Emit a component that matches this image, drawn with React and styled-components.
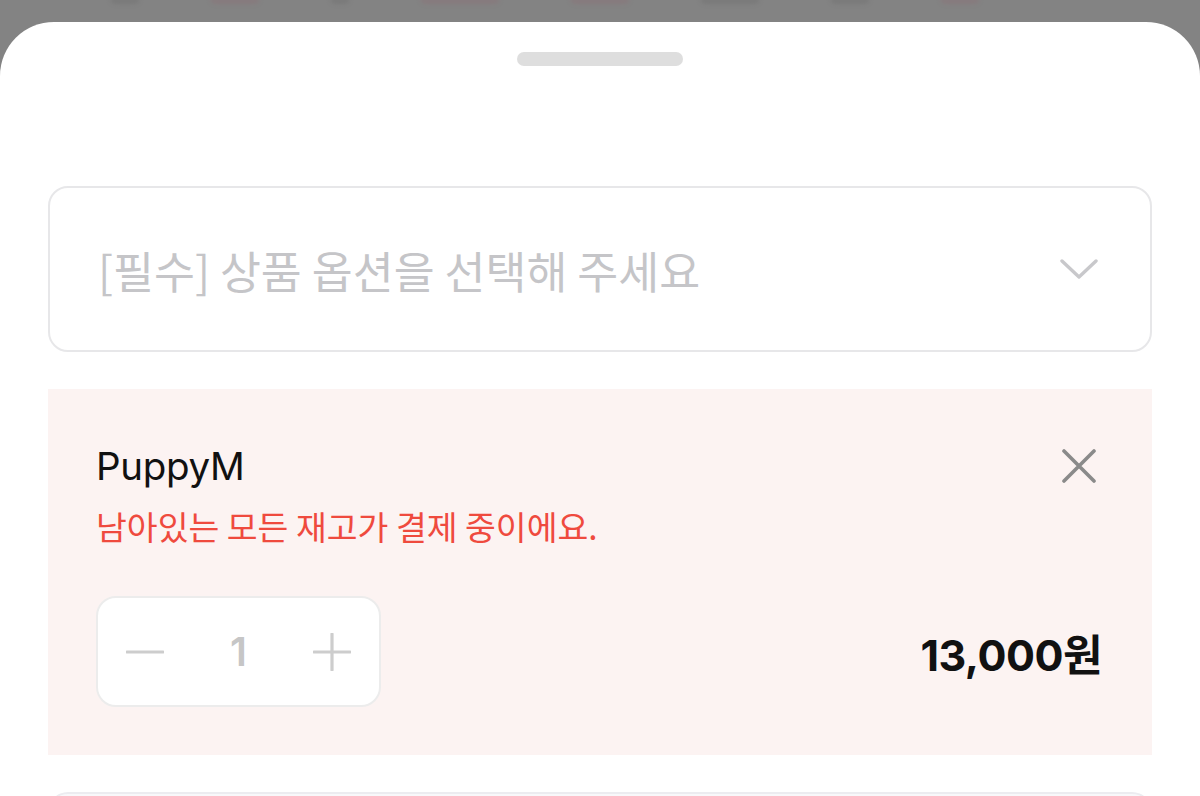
import React from "react";
import styled, { createGlobalStyle } from "styled-components";

const GlobalStyle = createGlobalStyle`
  html, body {
    margin: 0;
    padding: 0;
    background: #838383;
  }
  body {
    font-family: "Inter", "Noto Sans CJK KR", "Noto Sans", sans-serif;
    -webkit-font-smoothing: antialiased;
  }
`;

const Screen = styled.div`
  width: 1200px;
  height: 796px;
  overflow: hidden;
  display: flex;
  flex-direction: column;
  background: #838383;
`;

// bits of the page behind the sheet, cut off at the top
const Backdrop = styled.div`
  height: 22px;
  flex: none;
  display: flex;
  align-items: flex-start;
  gap: 70px;
  padding-left: 110px;
  overflow: hidden;
`;

const Blob = styled.span`
  display: block;
  width: ${(p) => p.w}px;
  height: 6px;
  margin-top: -2px;
  border-radius: 0 0 6px 6px;
  background: ${(p) => (p.pink ? "#8b7177" : "#707070")};
  filter: blur(2px);
  opacity: 0.5;
`;

const Sheet = styled.div`
  flex: 1;
  background: #ffffff;
  border-radius: 54px 54px 0 0;
  padding: 0 48px;
  display: flex;
  flex-direction: column;
`;

const Handle = styled.div`
  width: 166px;
  height: 14px;
  border-radius: 7px;
  background: #dedede;
  margin: 30px auto 0;
  flex: none;
`;

const Select = styled.div`
  margin-top: 120px;
  height: 166px;
  box-sizing: border-box;
  border: 2px solid #e7e7e9;
  border-radius: 20px;
  display: flex;
  align-items: center;
  justify-content: space-between;
  padding: 0 52px 0 48px;
  flex: none;
`;

const Placeholder = styled.span`
  font-family: "Noto Sans CJK KR", sans-serif;
  font-size: 44.5px;
  font-weight: 400;
  color: #c5c5c8;
`;

const OptionCard = styled.div`
  margin-top: 37px;
  height: 366px;
  box-sizing: border-box;
  background: #fcf3f2;
  padding: 52px 48px 48px;
  display: flex;
  flex-direction: column;
  flex: none;
`;

const HeaderRow = styled.div`
  display: flex;
  align-items: center;
  justify-content: space-between;
`;

const Name = styled.span`
  font-size: 38.5px;
  color: #111111;
  letter-spacing: -0.3px;
  line-height: 50px;
`;

const CloseButton = styled.button`
  border: none;
  background: none;
  padding: 0;
  margin-right: 8px;
  display: flex;
`;

const Warning = styled.div`
  margin-top: 13px;
  font-family: "Noto Sans CJK KR", sans-serif;
  font-size: 33.5px;
  line-height: 44px;
  color: #ef4a3e;
`;

const BottomRow = styled.div`
  margin-top: auto;
  display: flex;
  align-items: center;
  justify-content: space-between;
`;

const Stepper = styled.div`
  width: 285px;
  height: 111px;
  box-sizing: border-box;
  background: #ffffff;
  border: 2px solid #ececec;
  border-radius: 20px;
  display: flex;
  align-items: center;
  justify-content: space-between;
  padding: 0 28px;
`;

const StepButton = styled.button`
  border: none;
  background: none;
  padding: 0;
  display: flex;
`;

const Count = styled.span`
  font-size: 40px;
  font-weight: 600;
  color: #c6c6c6;
`;

const Price = styled.span`
  font-family: "Inter", "Noto Sans CJK KR", sans-serif;
  font-size: 43px;
  font-weight: 700;
  letter-spacing: -0.5px;
  color: #111111;
  margin-right: 2px;
`;

const NextField = styled.div`
  margin-top: 37px;
  height: 60px;
  border: 2px solid #ececf0;
  border-bottom: none;
  border-radius: 20px 20px 0 0;
  background: #f8f8fa;
  flex: none;
`;

const Chevron = () => (
  <svg width="38" height="22" viewBox="0 0 38 22" fill="none">
    <path d="M2 3 L19 19 L36 3" stroke="#c8c8cb" strokeWidth="3.4" strokeLinecap="round" strokeLinejoin="round" />
  </svg>
);

const CloseIcon = () => (
  <svg width="34" height="34" viewBox="0 0 34 34" fill="none">
    <path d="M2 2 L32 32 M32 2 L2 32" stroke="#8a8a8a" strokeWidth="3.6" strokeLinecap="round" />
  </svg>
);

const Minus = () => (
  <svg width="38" height="38" viewBox="0 0 38 38" fill="none">
    <path d="M1 19 H37" stroke="#cdcdcd" strokeWidth="3.2" strokeLinecap="round" />
  </svg>
);

const Plus = () => (
  <svg width="38" height="38" viewBox="0 0 38 38" fill="none">
    <path d="M1 19 H37 M19 1 V37" stroke="#cdcdcd" strokeWidth="3.2" strokeLinecap="round" />
  </svg>
);

const blobs = [
  { w: 30 }, { w: 50, pink: true }, { w: 20 }, { w: 80, pink: true },
  { w: 60, pink: true }, { w: 60 }, { w: 40 }, { w: 40, pink: true }
];

export default function App() {
  return (
    <>
      <GlobalStyle />
      <Screen>
        <Backdrop>
          {blobs.map((b, i) => (
            <Blob key={i} w={b.w} pink={b.pink} />
          ))}
        </Backdrop>
        <Sheet>
          <Handle />
          <Select>
            <Placeholder>[필수] 상품 옵션을 선택해 주세요</Placeholder>
            <Chevron />
          </Select>
          <OptionCard>
            <HeaderRow>
              <Name>PuppyM</Name>
              <CloseButton aria-label="삭제">
                <CloseIcon />
              </CloseButton>
            </HeaderRow>
            <Warning>남아있는 모든 재고가 결제 중이에요.</Warning>
            <BottomRow>
              <Stepper>
                <StepButton aria-label="빼기">
                  <Minus />
                </StepButton>
                <Count>1</Count>
                <StepButton aria-label="더하기">
                  <Plus />
                </StepButton>
              </Stepper>
              <Price>13,000원</Price>
            </BottomRow>
          </OptionCard>
          <NextField />
        </Sheet>
      </Screen>
    </>
  );
}
